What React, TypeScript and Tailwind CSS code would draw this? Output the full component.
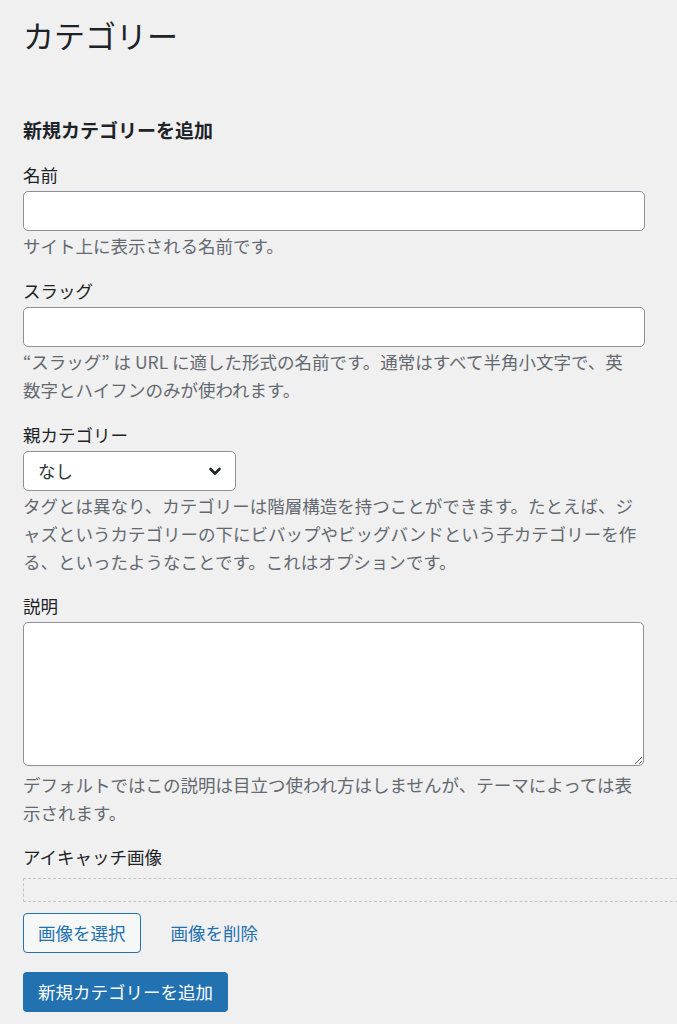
import React from 'react';

const font = { fontFamily: '"Noto Sans CJK JP", "Noto Sans", sans-serif' };

const Field: React.FC<{ label: string; children: React.ReactNode; help?: string; className?: string; helpClass?: string }> = ({
	label,
	children,
	help,
	className = '',
	helpClass = 'mt-[1px] w-full',
}) => (
	<div className={`flex flex-col ${className}`}>
		<label className="text-[17.5px] leading-[26px] text-[#1d2327] mb-[3px]">{label}</label>
		{children}
		{help && (
			<p className={`text-[17.5px] leading-[28px] text-[#646970] [text-spacing-trim:space-all] ${helpClass}`}>
				{help}
			</p>
		)}
	</div>
);

export default function App() {
	return (
		<div className="min-h-[1024px] w-full overflow-hidden bg-[#f0f0f1] pl-[23px] pr-[32px] pt-[14px] font-['Noto_Sans_CJK_JP',sans-serif]">
			<h1 className="text-[31px] leading-[42px] font-normal text-[#1d2327]">カテゴリー</h1>

			<h2 className="mt-[61px] text-[19px] leading-[26px] font-bold text-[#1d2327]">新規カテゴリーを追加</h2>

			<Field label="名前" help="サイト上に表示される名前です。" className="mt-[19px]">
				<input className="h-[40px] w-full rounded-[5px] border border-[#8c8f94] bg-white px-3 outline-none" />
			</Field>

			<Field
				label="スラッグ"
				help="“スラッグ” は URL に適した形式の名前です。通常はすべて半角小文字で、英数字とハイフンのみが使われます。"
				className="mt-[18px]"
				helpClass="mt-[1px] w-[612px]"
			>
				<input className="h-[40px] w-full rounded-[5px] border border-[#8c8f94] bg-white px-3 outline-none" />
			</Field>

			<Field
				label="親カテゴリー"
				help="タグとは異なり、カテゴリーは階層構造を持つことができます。たとえば、ジャズというカテゴリーの下にビバップやビッグバンドという子カテゴリーを作る、といったようなことです。これはオプションです。"
				className="mt-[18px]"
			>
				<div className="flex h-[40px] w-[213px] items-center justify-between rounded-[5px] border border-[#8c8f94] bg-white pl-[14px] pr-[12px]">
					<span className="text-[17.5px] text-[#2c3338]">なし</span>
					<svg width="16" height="16" viewBox="0 0 16 16" fill="none">
						<path d="M3.5 6 L8 10.5 L12.5 6" stroke="#1d2327" strokeWidth="2.6" strokeLinecap="round" strokeLinejoin="round" />
					</svg>
				</div>
			</Field>

			<Field
				label="説明"
				help="デフォルトではこの説明は目立つ使われ方はしませんが、テーマによっては表示されます。"
				className="mt-[17px]"
				helpClass="mt-[5px] w-full"
			>
				<textarea className="h-[144px] w-[621px] rounded-[5px] border border-[#8c8f94] bg-white px-3 py-2 outline-none" style={font} />
			</Field>

			<div className="mt-[17px] flex flex-col">
				<label className="text-[17.5px] leading-[26px] text-[#1d2327]">アイキャッチ画像</label>
				<div className="mt-[8px] h-[24px] w-[700px] border border-dashed border-[#c3c4c7]" />
				<div className="mt-[11px] flex items-center gap-[30px]">
					<button className="h-[40px] rounded-[4px] border border-[#2271b1] bg-[#f6f7f7] px-[14px] text-[17.5px] text-[#2271b1]">
						画像を選択
					</button>
					<a className="text-[17.5px] text-[#2271b1]">画像を削除</a>
				</div>
				<div className="mt-[19px]">
					<button className="h-[40px] w-[205px] rounded-[4px] bg-[#2271b1] text-[17.5px] text-white">
						新規カテゴリーを追加
					</button>
				</div>
			</div>
		</div>
	);
}
